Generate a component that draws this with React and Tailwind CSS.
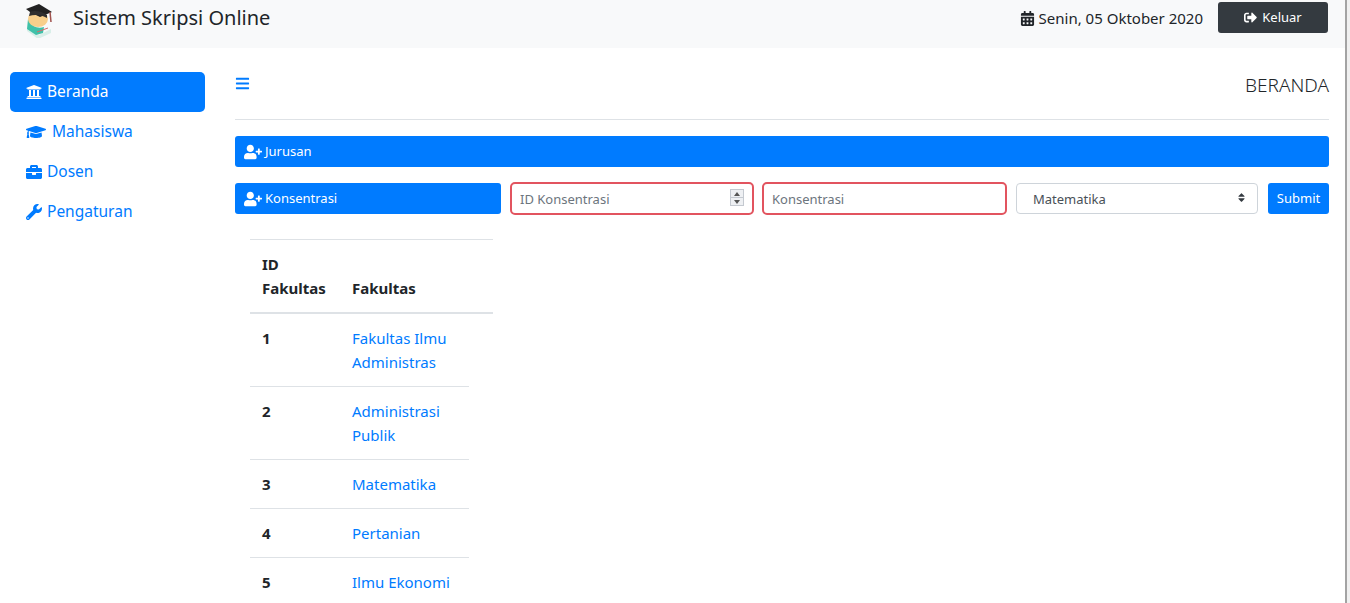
import { FaUniversity, FaGraduationCap, FaBriefcase, FaWrench, FaBars, FaUserPlus, FaCalendarAlt, FaSignOutAlt, FaSort } from "react-icons/fa";

const NAV = [
  { label: "Beranda", icon: FaUniversity, active: true, gap: "gap-[5px]" },
  { label: "Mahasiswa", icon: FaGraduationCap, gap: "gap-[5px]" },
  { label: "Dosen", icon: FaBriefcase, gap: "gap-[5px]" },
  { label: "Pengaturan", icon: FaWrench, gap: "gap-[5px]" },
];

const ROWS = [
  { id: 1, name: ["Fakultas Ilmu", "Administras"] },
  { id: 2, name: ["Administrasi", "Publik"] },
  { id: 3, name: ["Matematika"] },
  { id: 4, name: ["Pertanian"] },
  { id: 5, name: ["Ilmu Ekonomi"] },
];

function Logo() {
  return (
    <svg width="30" height="36" viewBox="0 0 30 36" className="shrink-0">
      <path d="M3 25 L15 33 L27 27 L27 31 L14 37 L3 29Z" fill="#d9efe9" />
      <path d="M4 17 C8 25 14 27 20 25 L19 31 L12 33 L3 27Z" fill="#3fc1a9" />
      <ellipse cx="14" cy="17" rx="10" ry="8" fill="#f8cf8b" />
      <path d="M2 7 L15 2 L28 10 L16 15 L6 10Z" fill="#222222" />
      <path d="M6 10 C10 8 18 9 23 13 L23 16 C18 13 11 12 5 14Z" fill="#2f2f2f" />
      <path d="M26 10 L27 20" stroke="#a0524d" strokeWidth="1.5" fill="none" />
      <path d="M13 30 L24 26" stroke="#d56a6a" strokeWidth="1" fill="none" />
    </svg>
  );
}

function BlueBar({ label, className }) {
  return (
    <div className={`flex h-[31px] items-center gap-[3px] rounded-[3px] bg-[#007bff] pl-[9px] text-[13px] text-white ${className}`}>
      <FaUserPlus className="text-[18px] w-[18px]" />
      <span>{label}</span>
    </div>
  );
}

function Spinner() {
  return (
    <span className="pointer-events-none absolute right-[10px] top-[7px] flex h-[17px] w-[14px] flex-col border border-[#c4c9d0] bg-[#eef0f3]">
      <span className="flex flex-1 items-center justify-center border-b border-[#c4c9d0]">
        <span className="h-0 w-0 border-x-[3px] border-b-[4px] border-x-transparent border-b-[#555]" />
      </span>
      <span className="flex flex-1 items-center justify-center">
        <span className="h-0 w-0 border-x-[3px] border-t-[4px] border-x-transparent border-t-[#555]" />
      </span>
    </span>
  );
}

export default function App() {
  return (
    <div className="flex h-[603px] w-[1350px] overflow-hidden bg-white font-['Noto_Sans','Open_Sans',sans-serif] text-[#212529]">
      <div className="w-[1345px] shrink-0">
        {/* header */}
        <header className="flex h-12 items-start bg-[#f8f9fa] pl-[24px] pr-[17px]">
          <div className="mt-[2px]"><Logo /></div>
          <div className="ml-[19px] mt-[3px] text-[20px] leading-[30px]">Sistem Skripsi Online</div>
          <div className="ml-auto mt-[7px] flex items-center gap-[4px] text-[15px] leading-[22px]">
            <FaCalendarAlt className="text-[15px]" />
            <span>Senin, 05 Oktober 2020</span>
          </div>
          <div className="ml-[15px] mt-[2px] flex h-[31px] w-[110px] items-center justify-center gap-[5px] rounded-[3px] bg-[#343a40] text-[13px] text-white">
            <FaSignOutAlt className="text-[13px]" />
            <span>Keluar</span>
          </div>
        </header>

        <div className="flex">
          {/* sidebar */}
          <nav className="ml-[10px] mt-6 w-[195px] shrink-0">
            {NAV.map((item) => {
              const Icon = item.icon;
              return (
                <div
                  key={item.label}
                  className={`flex h-10 items-center px-4 text-[15.5px] ${item.gap} ${item.active ? "rounded-[5px] bg-[#007bff] text-white" : "text-[#007bff]"}`}
                >
                  <Icon className={item.label === "Mahasiswa" ? "text-[20px] mr-[1px]" : "text-[16px]"} />
                  <span>{item.label}</span>
                </div>
              );
            })}
          </nav>

          {/* main */}
          <main className="ml-[30px] w-[1094px] shrink-0">
            <div className="flex h-[72px] items-start justify-between border-b border-[#dee2e6]">
              <FaBars className="mt-[28px] text-[14px] w-[15px] h-[15px] text-[#007bff]" />
              <div className="mt-[22px] text-[19px] font-light leading-[30px]">BERANDA</div>
            </div>

            <BlueBar label="Jurusan" className="mt-4 w-full" />

            <div className="mt-4 flex items-start">
              <BlueBar label="Konsentrasi" className="w-[266px]" />
              <div className="relative -mt-px ml-[9px] w-[244px]">
                <input
                  placeholder="ID Konsentrasi"
                  className="h-[33px] w-full rounded-[5px] border-2 border-[#e2545f] pl-2 text-[13px] outline-none placeholder:text-[#6c757d]"
                />
                <Spinner />
              </div>
              <input
                placeholder="Konsentrasi"
                className="-mt-px ml-2 h-[33px] w-[245px] rounded-[5px] border-2 border-[#e2545f] pl-2 text-[13px] outline-none placeholder:text-[#6c757d]"
              />
              <div className="relative ml-[9px] w-[242px]">
                <select
                  defaultValue="Matematika"
                  className="h-[31px] w-full appearance-none rounded-[4px] border border-[#ced4da] bg-white pl-4 pt-[2px] text-[13px] text-[#495057] outline-none"
                >
                  <option>Matematika</option>
                </select>
                <FaSort className="pointer-events-none absolute right-[11px] top-[9px] text-[11px] text-[#343a40]" />
              </div>
              <div className="ml-[10px] flex h-[31px] w-[61px] items-center justify-center rounded-[3px] bg-[#007bff] text-[13px] text-white">
                Submit
              </div>
            </div>

            {/* fakultas table */}
            <div className="ml-[15px] mt-6 w-[243px] text-[15px] leading-6">
              <div className="flex items-end border-y border-b-2 border-[#dee2e6] p-3 font-bold">
                <div className="w-[90px] shrink-0">ID<br />Fakultas</div>
                <div>Fakultas</div>
              </div>
              <div className="w-[219px]">
                {ROWS.map((row) => (
                  <div key={row.id} className="flex border-b border-[#dee2e6] p-3">
                    <div className="w-[90px] shrink-0 font-bold">{row.id}</div>
                    <div className="whitespace-nowrap text-[#007bff]">
                      {row.name.map((line) => (
                        <div key={line}>{line}</div>
                      ))}
                    </div>
                  </div>
                ))}
              </div>
            </div>
          </main>
        </div>
      </div>

      {/* browser scrollbar edge */}
      <div className="w-[5px] shrink-0 border-l-2 border-[#a3a3a3] bg-[#f0f0f0]" />
    </div>
  );
}
